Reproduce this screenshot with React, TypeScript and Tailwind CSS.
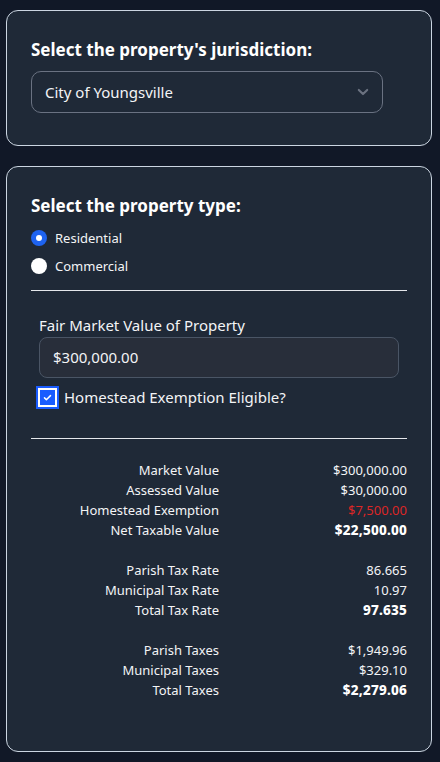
import React, { useState } from 'react';

const rows1 = [
  { label: 'Market Value', value: '$300,000.00' },
  { label: 'Assessed Value', value: '$30,000.00' },
  { label: 'Homestead Exemption', value: '$7,500.00', red: true },
  { label: 'Net Taxable Value', value: '$22,500.00', bold: true },
];

const rows2 = [
  { label: 'Parish Tax Rate', value: '86.665' },
  { label: 'Municipal Tax Rate', value: '10.97' },
  { label: 'Total Tax Rate', value: '97.635', bold: true },
];

const rows3 = [
  { label: 'Parish Taxes', value: '$1,949.96' },
  { label: 'Municipal Taxes', value: '$329.10' },
  { label: 'Total Taxes', value: '$2,279.06', bold: true },
];

type Row = { label: string; value: string; red?: boolean; bold?: boolean };

const Group = ({ rows }: { rows: Row[] }) => (
  <div className="grid grid-cols-2">
    {rows.map((r) => (
      <React.Fragment key={r.label}>
        <div className="text-right text-[13px] leading-5 text-gray-100">{r.label}</div>
        <div
          className={`text-right leading-5 ${r.red ? 'text-[#dc2626]' : 'text-gray-100'} ${
            r.bold ? 'text-[13.5px] font-extrabold tracking-[0.2px] text-white' : 'text-[13px]'
          }`}
        >
          {r.value}
        </div>
      </React.Fragment>
    ))}
  </div>
);

const App = () => {
  const [type, setType] = useState('residential');
  const [homestead, setHomestead] = useState(true);

  return (
    <div
      className="min-h-screen bg-[#111827] pl-[6px] pr-[8px] pt-[10px] pb-[10px] text-white"
      style={{ fontFamily: '"Noto Sans", "Open Sans", sans-serif' }}
    >
      <div className="rounded-xl border border-[#cbd5e1] bg-[#1f2937] px-6 pt-[27px] pb-[32px]">
        <h2 className="text-[17px] font-bold leading-6">Select the property's jurisdiction:</h2>
        <div className="mt-[9px] flex h-[42px] w-[352px] items-center justify-between rounded-[10px] border border-gray-500 pl-[13px] pr-[12px]">
          <span className="text-[15px] text-gray-100">City of Youngsville</span>
          <svg width="14" height="14" viewBox="0 0 20 20" fill="none" stroke="#6b7280" strokeWidth="3" strokeLinecap="round" strokeLinejoin="round">
            <path d="M4 7l6 6 6-6" />
          </svg>
        </div>
      </div>

      <div className="mt-[20px] rounded-xl border border-[#cbd5e1] bg-[#1f2937] px-6 pt-[27px] pb-[51px]">
        <h2 className="text-[17px] font-bold leading-6">Select the property type:</h2>
        <div className="mt-[12px] flex flex-col gap-[12px]">
          {[
            ['residential', 'Residential'],
            ['commercial', 'Commercial'],
          ].map(([k, l]) => (
            <label key={k} className="flex cursor-pointer items-center gap-[8px]" onClick={() => setType(k)}>
              {type === k ? (
                <span className="flex h-4 w-4 items-center justify-center rounded-full bg-[#1e63f0]">
                  <span className="h-[6px] w-[6px] rounded-full bg-white" />
                </span>
              ) : (
                <span className="h-4 w-4 rounded-full bg-white" />
              )}
              <span className="text-[13px] leading-4 text-gray-100">{l}</span>
            </label>
          ))}
        </div>
        <hr className="mt-[16px] border-t border-gray-200" />

        <div className="px-2 pt-[24px]">
          <div className="text-[15px] leading-5 text-gray-100">Fair Market Value of Property</div>
          <div className="mt-[2px] flex h-[41px] items-center rounded-lg border border-gray-600 bg-[#282e3a] px-[13px] text-[15px] text-gray-100">
            $300,000.00
          </div>
          <div className="mt-[8px] -ml-[3px] flex items-center gap-[5px]" onClick={() => setHomestead(!homestead)}>
            <span className="flex h-[23px] w-[23px] items-center justify-center bg-[#1a5cff] p-[2px]">
              <span className="flex h-full w-full items-center justify-center bg-white p-[2px]">
                <span className={`flex h-full w-full items-center justify-center ${homestead ? 'bg-[#1a5cff]' : 'bg-white'}`}>
                  {homestead && (
                    <svg width="9" height="9" viewBox="0 0 12 12" fill="none" stroke="white" strokeWidth="2" strokeLinecap="round" strokeLinejoin="round">
                      <path d="M2 6.5l2.5 2.5L10 3.5" />
                    </svg>
                  )}
                </span>
              </span>
            </span>
            <span className="text-[15px] text-gray-100">Homestead Exemption Eligible?</span>
          </div>
        </div>
        <hr className="mt-[29px] border-t border-gray-200" />

        <div className="mt-[21px] flex flex-col gap-5">
          <Group rows={rows1} />
          <Group rows={rows2} />
          <Group rows={rows3} />
        </div>
      </div>
    </div>
  );
};

export default App;
